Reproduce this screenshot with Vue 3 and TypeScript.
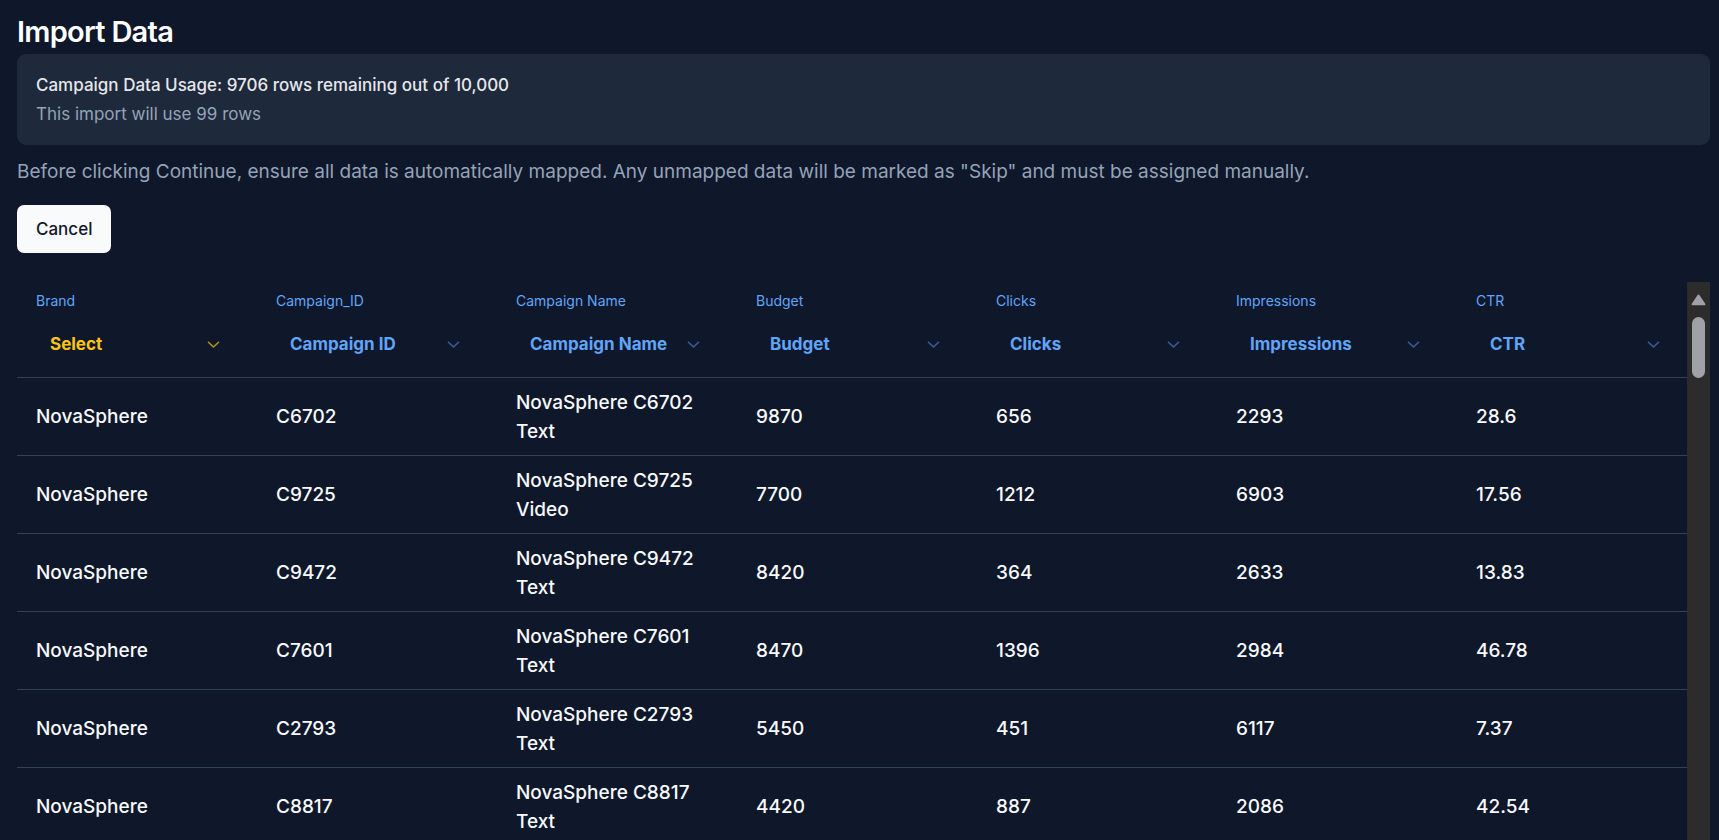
<script setup lang="ts">
import { ref } from 'vue'

interface Column {
  source: string
  target: string
}

interface Row {
  brand: string
  id: string
  name: string
  values: string[]
}

const fields = ['Select', 'Campaign ID', 'Campaign Name', 'Budget', 'Clicks', 'Impressions', 'CTR']

const columns = ref<Column[]>([
  { source: 'Brand', target: 'Select' },
  { source: 'Campaign_ID', target: 'Campaign ID' },
  { source: 'Campaign Name', target: 'Campaign Name' },
  { source: 'Budget', target: 'Budget' },
  { source: 'Clicks', target: 'Clicks' },
  { source: 'Impressions', target: 'Impressions' },
  { source: 'CTR', target: 'CTR' },
])

const rows: Row[] = [
  { brand: 'NovaSphere', id: 'C6702', name: 'NovaSphere C6702 Text', values: ['9870', '656', '2293', '28.6'] },
  { brand: 'NovaSphere', id: 'C9725', name: 'NovaSphere C9725 Video', values: ['7700', '1212', '6903', '17.56'] },
  { brand: 'NovaSphere', id: 'C9472', name: 'NovaSphere C9472 Text', values: ['8420', '364', '2633', '13.83'] },
  { brand: 'NovaSphere', id: 'C7601', name: 'NovaSphere C7601 Text', values: ['8470', '1396', '2984', '46.78'] },
  { brand: 'NovaSphere', id: 'C2793', name: 'NovaSphere C2793 Text', values: ['5450', '451', '6117', '7.37'] },
  { brand: 'NovaSphere', id: 'C8817', name: 'NovaSphere C8817 Text', values: ['4420', '887', '2086', '42.54'] },
]
</script>

<template>
  <main class="page">
    <h1 class="title">Import Data</h1>

    <section class="usage">
      <p class="usage-main">Campaign Data Usage: 9706 rows remaining out of 10,000</p>
      <p class="usage-sub">This import will use 99 rows</p>
    </section>

    <p class="hint">
      Before clicking Continue, ensure all data is automatically mapped. Any unmapped data will be
      marked as "Skip" and must be assigned manually.
    </p>

    <button class="cancel" type="button">Cancel</button>

    <div class="frame">
      <div class="viewport">
        <table class="grid">
          <thead>
            <tr>
              <th v-for="(column, i) in columns" :key="column.source" scope="col">
                <label class="source" :for="`map-${i}`">{{ column.source }}</label>
                <span class="picker" :class="{ unmapped: column.target === 'Select' }">
                  <select :id="`map-${i}`" v-model="column.target">
                    <option v-for="field in fields" :key="field" :value="field">{{ field }}</option>
                  </select>
                  <svg class="chevron" viewBox="0 0 15 15" aria-hidden="true">
                    <path
                      fill-rule="evenodd"
                      clip-rule="evenodd"
                      fill="currentColor"
                      stroke="currentColor"
                      stroke-width="0.2"
                      d="M3.135 6.158a.5.5 0 0 1 .707-.023L7.5 9.565l3.658-3.43a.5.5 0 0 1 .684.73l-4 3.75a.5.5 0 0 1-.684 0l-4-3.75a.5.5 0 0 1-.023-.707Z"
                    />
                  </svg>
                </span>
              </th>
            </tr>
          </thead>
          <tbody>
            <tr v-for="row in rows" :key="row.id">
              <td>{{ row.brand }}</td>
              <td>{{ row.id }}</td>
              <td>{{ row.name }}</td>
              <td v-for="(value, i) in row.values" :key="i">{{ value }}</td>
            </tr>
          </tbody>
        </table>
      </div>
      <div class="scrollbar" aria-hidden="true">
        <svg class="arrow" viewBox="0 0 14 11">
          <path d="M7 1.5 12.5 9.5H1.5Z" fill="#9fa1a6" stroke="#9fa1a6" stroke-width="2" stroke-linejoin="round" />
        </svg>
        <div class="thumb"></div>
      </div>
    </div>
  </main>
</template>

<style>
body {
  margin: 0;
  background: #0f172a;
}
</style>

<style scoped>
.page {
  box-sizing: border-box;
  height: 100vh;
  overflow: hidden;
  display: flex;
  flex-direction: column;
  padding: 14px 9px 0 17px;
  background: #0f172a;
  color: #f8fafc;
  font-family: Inter, 'Liberation Sans', sans-serif;
  font-size: 19px;
  line-height: 29px;
}

.title {
  margin: 0;
  font-size: 29px;
  font-weight: 600;
  line-height: 36px;
  letter-spacing: -0.025em;
  color: #ffffff;
}

.usage {
  display: flex;
  flex-direction: column;
  gap: 5px;
  margin-top: 4px;
  padding: 19px;
  border-radius: 9px;
  background: #1e293b;
  font-size: 17px;
  line-height: 24px;
}

.usage p {
  margin: 0;
}

.usage-main {
  font-weight: 500;
  color: #e5e7eb;
}

.usage-sub {
  color: #94a3b8;
}

.hint {
  margin: 12px 0 0;
  color: #94a3b8;
}

.cancel {
  align-self: flex-start;
  height: 48px;
  margin-top: 19px;
  padding: 0 19px;
  border: 0;
  border-radius: 7px;
  background: #f8fafc;
  color: #0f172a;
  font: 500 17px/24px Inter, 'Liberation Sans', sans-serif;
  flex-shrink: 0;
}

.frame {
  flex: 1;
  min-height: 0;
  display: flex;
  margin-top: 29px;
}

.viewport {
  flex: 1;
  min-width: 0;
  overflow: hidden;
}

.grid {
  width: 1680px;
  table-layout: fixed;
  border-collapse: separate;
  border-spacing: 0;
}

th,
td {
  box-sizing: border-box;
  padding: 9px 19px;
  border-bottom: 1px solid #334155;
  text-align: left;
  vertical-align: middle;
  font-weight: 500;
}

td {
  height: 78px;
}

th {
  height: 96px;
  color: #60a5fa;
}

.source {
  display: block;
  margin-bottom: 10px;
  font-size: 14px;
  font-weight: 400;
  line-height: 19px;
}

.picker {
  position: relative;
  display: block;
  color: #60a5fa;
}

.picker.unmapped {
  color: #fac515;
}

.picker select {
  display: block;
  box-sizing: border-box;
  width: 100%;
  height: 48px;
  padding: 0 14px;
  border: 0;
  background: transparent;
  color: inherit;
  font: 700 17px/24px Inter, 'Liberation Sans', sans-serif;
  appearance: none;
}

.picker option {
  background: #0f172a;
}

.chevron {
  position: absolute;
  top: 14px;
  right: 15px;
  width: 19px;
  height: 19px;
  opacity: 0.5;
  pointer-events: none;
}

.unmapped .chevron {
  opacity: 0.7;
}

.scrollbar {
  flex: none;
  display: flex;
  flex-direction: column;
  align-items: center;
  gap: 11px;
  width: 23px;
  padding-top: 12px;
  box-sizing: border-box;
  background: #2c2c2c;
}

.arrow {
  width: 15px;
  height: 12px;
}

.thumb {
  width: 13px;
  height: 61px;
  border-radius: 7px;
  background: #9fa1a6;
}
</style>
